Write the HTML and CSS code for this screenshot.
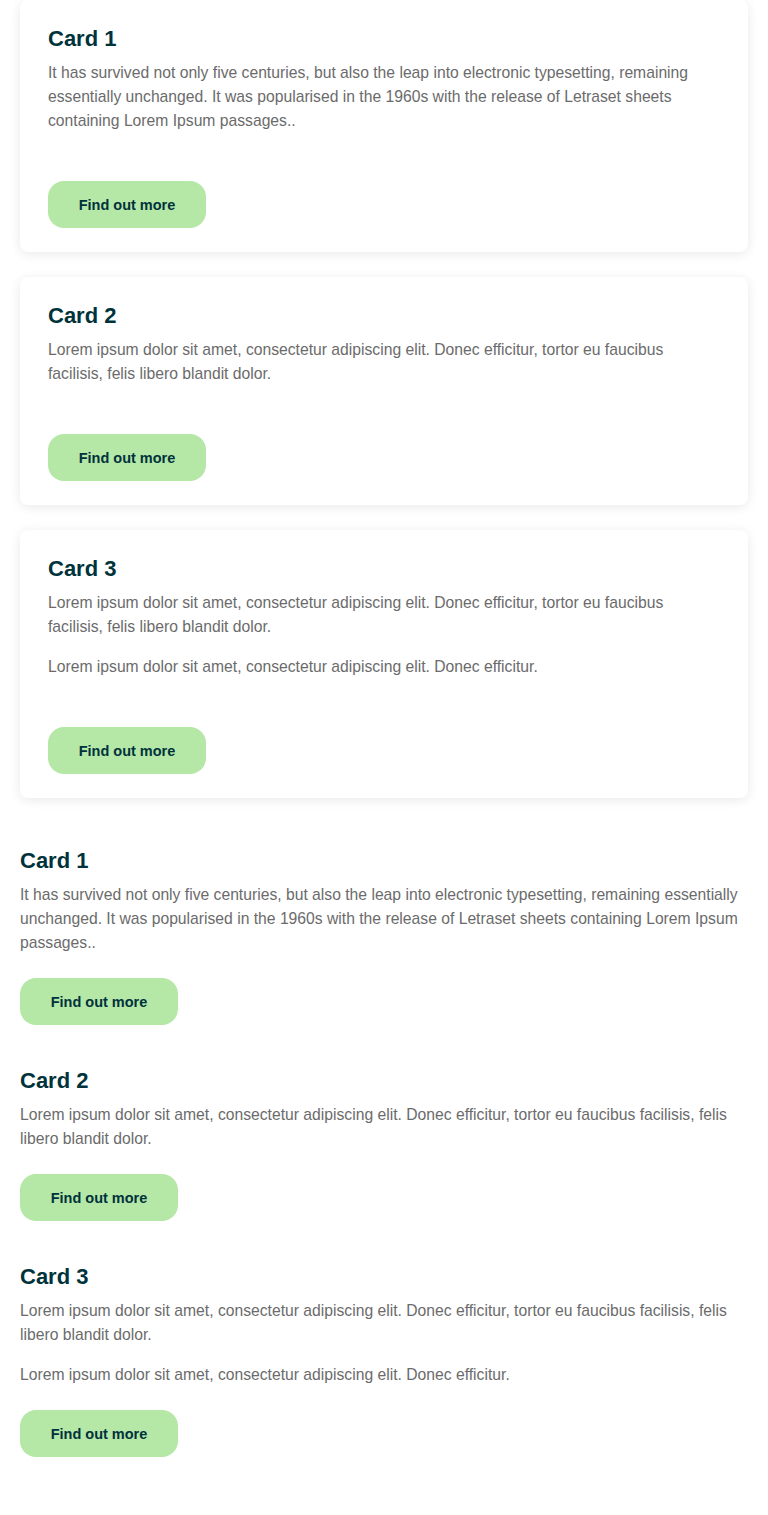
FILE: index.html
```html
<!DOCTYPE html>
<html lang="en">
<head>
<meta charset="utf-8">
<title>Cards</title>
<link rel="stylesheet" href="styles.css">
</head>
<body>
<main class="page">
  <section class="card-list">
    <article class="card">
      <h2 class="card-title">Card 1</h2>
      <p class="card-text">It has survived not only five centuries, but also the leap into electronic typesetting, remaining essentially unchanged. It was popularised in the 1960s with the release of Letraset sheets containing Lorem Ipsum passages..</p>
      <a class="btn" href="#">Find out more</a>
    </article>
    <article class="card">
      <h2 class="card-title">Card 2</h2>
      <p class="card-text">Lorem ipsum dolor sit amet, consectetur adipiscing elit. Donec efficitur, tortor eu faucibus facilisis, felis libero blandit dolor.</p>
      <a class="btn" href="#">Find out more</a>
    </article>
    <article class="card">
      <h2 class="card-title">Card 3</h2>
      <p class="card-text">Lorem ipsum dolor sit amet, consectetur adipiscing elit. Donec efficitur, tortor eu faucibus facilisis, felis libero blandit dolor.</p>
      <p class="card-text">Lorem ipsum dolor sit amet, consectetur adipiscing elit. Donec efficitur.</p>
      <a class="btn" href="#">Find out more</a>
    </article>
  </section>

  <section class="plain-list">
    <article class="item">
      <h2 class="card-title">Card 1</h2>
      <p class="card-text">It has survived not only five centuries, but also the leap into electronic typesetting, remaining essentially unchanged. It was popularised in the 1960s with the release of Letraset sheets containing Lorem Ipsum passages..</p>
      <a class="btn" href="#">Find out more</a>
    </article>
    <article class="item">
      <h2 class="card-title">Card 2</h2>
      <p class="card-text">Lorem ipsum dolor sit amet, consectetur adipiscing elit. Donec efficitur, tortor eu faucibus facilisis, felis libero blandit dolor.</p>
      <a class="btn" href="#">Find out more</a>
    </article>
    <article class="item">
      <h2 class="card-title">Card 3</h2>
      <p class="card-text">Lorem ipsum dolor sit amet, consectetur adipiscing elit. Donec efficitur, tortor eu faucibus facilisis, felis libero blandit dolor.</p>
      <p class="card-text">Lorem ipsum dolor sit amet, consectetur adipiscing elit. Donec efficitur.</p>
      <a class="btn" href="#">Find out more</a>
    </article>
  </section>
</main>
</body>
</html>
```

FILE: styles.css
```css
* { box-sizing: border-box; }

html, body {
  margin: 0;
  padding: 0;
  background: #ffffff;
}

body {
  font-family: "Liberation Sans", Arial, sans-serif;
  color: #6b6b6b;
}

.page {
  padding: 0 20px 56px;
}

.card-list {
  display: flex;
  flex-direction: column;
  gap: 25px;
}

.card {
  display: flex;
  flex-direction: column;
  align-items: flex-start;
  background: #fff;
  border-radius: 8px;
  padding: 25px 28px 24px;
  box-shadow: 0 2px 12px rgba(0, 0, 0, 0.09);
}

.card .card-text {
  max-width: 656px;
}

.card-title {
  margin: 0 0 8px;
  font-size: 22px;
  line-height: 28px;
  font-weight: 700;
  color: #00323c;
}

.card-text {
  margin: 0 0 16px;
  font-size: 15.7px;
  line-height: 24px;
  color: #6b6b6b;
}

.card .btn {
  margin-top: 32px;
}

.btn {
  display: inline-flex;
  align-items: center;
  justify-content: center;
  height: 47px;
  width: 158px;
  border-radius: 16px;
  background: #b5e7a6;
  color: #00323c;
  font-size: 14.5px;
  font-weight: 700;
  text-decoration: none;
}

.plain-list {
  display: flex;
  flex-direction: column;
  gap: 42px;
  margin-top: 49px;
}

.item {
  display: flex;
  flex-direction: column;
  align-items: flex-start;
}

.item .btn {
  margin-top: 7px;
}
```
